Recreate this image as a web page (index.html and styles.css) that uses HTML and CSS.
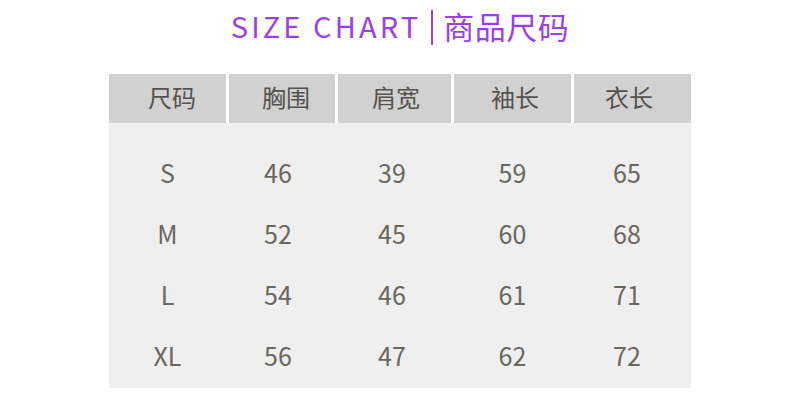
FILE: index.html
```html
<!DOCTYPE html>
<html lang="zh">
<head>
<meta charset="utf-8">
<link rel="stylesheet" href="styles.css">
</head>
<body>
<div class="page">
  <h1 class="title"><span class="en">SIZE CHART</span><span class="bar"></span><span class="cn">商品尺码</span></h1>
  <div class="table">
    <div class="head">
      <div class="hcell">尺码</div>
      <div class="hcell">胸围</div>
      <div class="hcell">肩宽</div>
      <div class="hcell">袖长</div>
      <div class="hcell">衣长</div>
    </div>
    <div class="body">
      <div class="cell">S</div><div class="cell">46</div><div class="cell">39</div><div class="cell">59</div><div class="cell">65</div>
      <div class="cell">M</div><div class="cell">52</div><div class="cell">45</div><div class="cell">60</div><div class="cell">68</div>
      <div class="cell">L</div><div class="cell">54</div><div class="cell">46</div><div class="cell">61</div><div class="cell">71</div>
      <div class="cell">XL</div><div class="cell">56</div><div class="cell">47</div><div class="cell">62</div><div class="cell">72</div>
    </div>
  </div>
</div>
</body>
</html>
```

FILE: styles.css
```css
html, body {
  margin: 0;
  padding: 0;
  background: #ffffff;
}
body {
  width: 800px;
  height: 410px;
  overflow: hidden;
  font-family: "Noto Sans CJK SC", "Noto Sans", sans-serif;
}
.page {
  display: flex;
  flex-direction: column;
  align-items: center;
}
.title {
  margin: 0;
  height: 74px;
  display: flex;
  align-items: center;
  justify-content: center;
  padding-bottom: 24px;
  box-sizing: border-box;
  color: #9b3fe8;
  font-weight: 400;
  font-size: 29px;
  line-height: 1;
}
.en {
  letter-spacing: 3.1px;
}
.bar {
  display: inline-block;
  width: 2px;
  height: 35px;
  background: #9b3fe8;
  margin: 4px 10px 0 10px;
}
.cn {
  font-size: 31px;
  letter-spacing: 0.5px;
}
.table {
  width: 582px;
}
.head, .body {
  display: grid;
  grid-template-columns: 117px 106px 113px 117px 117px;
  column-gap: 3px;
}
.hcell {
  height: 49px;
  box-sizing: border-box;
  background: #d1d1d1;
  color: #55524e;
  font-size: 24px;
  display: flex;
  align-items: center;
  justify-content: center;
  padding-bottom: 4px;
}
.hcell:nth-child(1) { padding-left: 9px; }
.hcell:nth-child(2) { padding-left: 8px; }
.hcell:nth-child(3) { padding-left: 3px; }
.hcell:nth-child(4) { padding-left: 5px; }
.hcell:nth-child(5) { padding-right: 7px; }
.body {
  background: #efefef;
  padding-top: 18px;
  padding-bottom: 3px;
  grid-auto-rows: 61px;
}
.cell {
  display: flex;
  align-items: center;
  justify-content: center;
  color: #6a6660;
  font-size: 25px;
}
.cell:nth-child(5n+2) { padding-right: 8px; }
.cell:nth-child(5n+3) { padding-right: 5px; }
.cell:nth-child(5n+5) { padding-right: 11px; }
```
